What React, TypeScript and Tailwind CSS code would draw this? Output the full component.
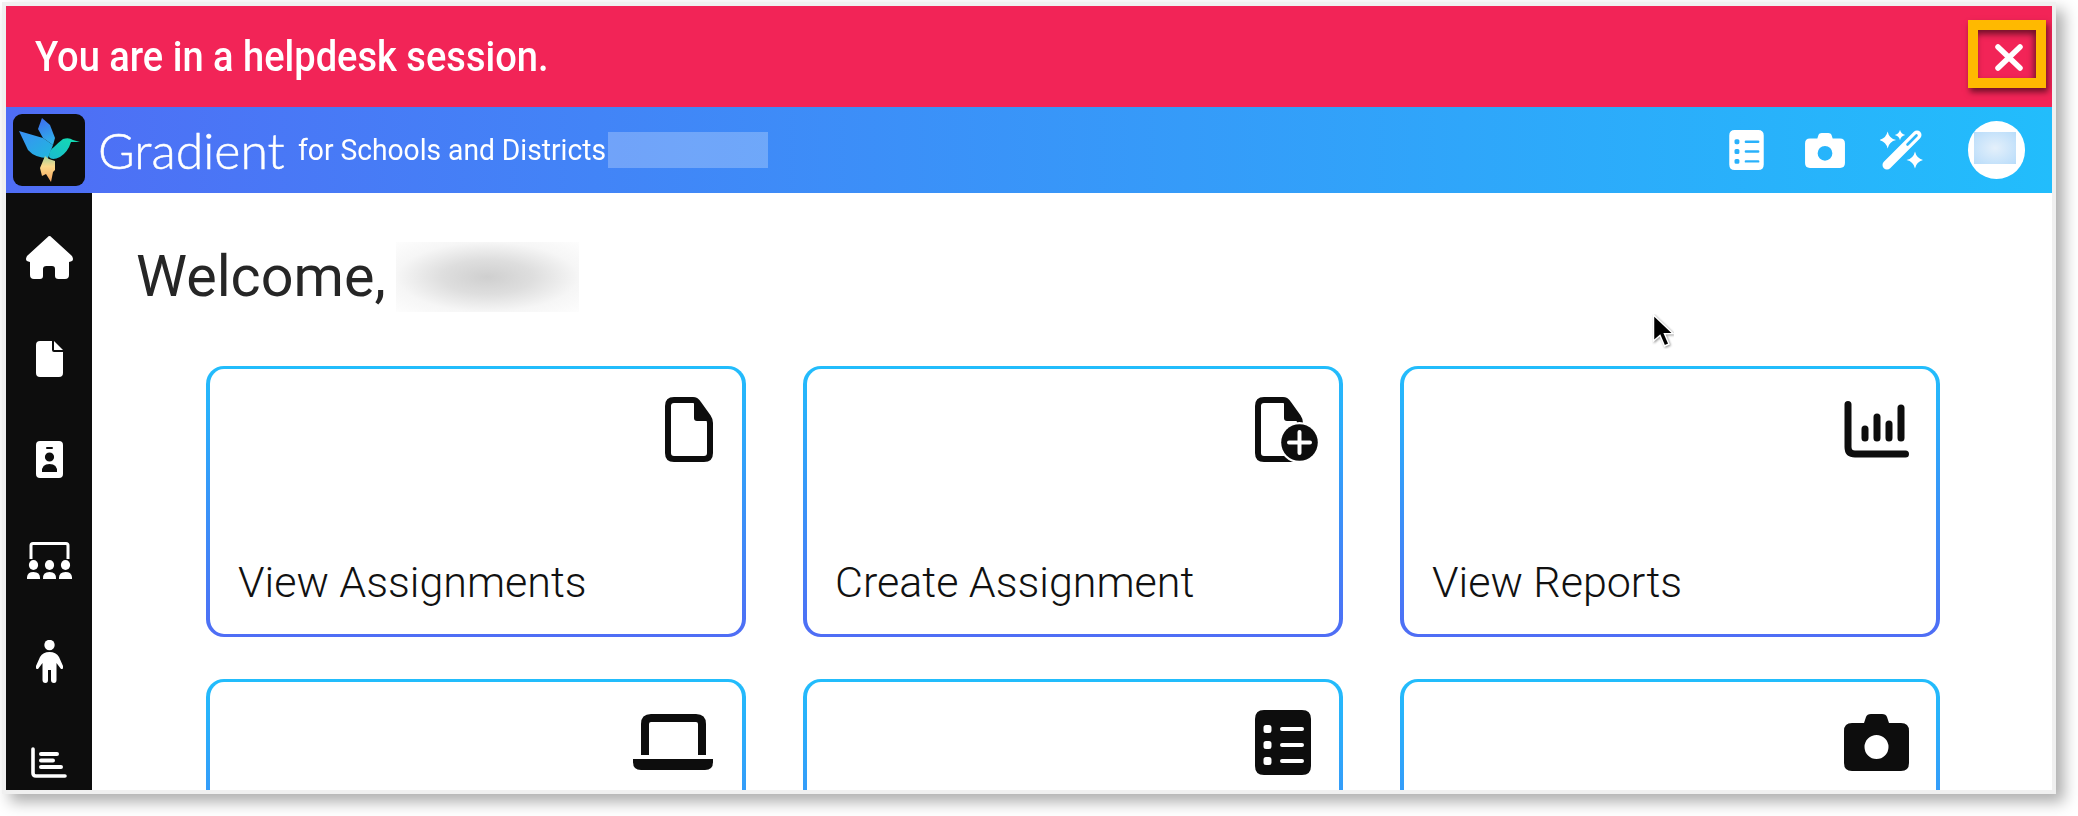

import React from "react";

const rr = (x: number, y: number, w: number, h: number, r: number) =>
  `M${x + r} ${y}H${x + w - r}Q${x + w} ${y} ${x + w} ${y + r}V${y + h - r}Q${x + w} ${y + h} ${x + w - r} ${y + h}H${x + r}Q${x} ${y + h} ${x} ${y + h - r}V${y + r}Q${x} ${y} ${x + r} ${y}Z`;
const circle = (cx: number, cy: number, r: number) =>
  `M${cx - r} ${cy}A${r} ${r} 0 1 0 ${cx + r} ${cy}A${r} ${r} 0 1 0 ${cx - r} ${cy}Z`;
const spark = (cx: number, cy: number, r: number) => {
  const k = r * 0.18;
  return `M${cx} ${cy - r}Q${cx + k} ${cy - k} ${cx + r} ${cy}Q${cx + k} ${cy + k} ${cx} ${cy + r}Q${cx - k} ${cy + k} ${cx - r} ${cy}Q${cx - k} ${cy - k} ${cx} ${cy - r}Z`;
};

const DocOutline = () => (
  <svg width="48" height="65" viewBox="0 0 48 65" className="text-[#0d0d0d]">
    <path d="M9 3H28Q31 3 33 6L43 20Q45 23 45 26V56Q45 62 39 62H9Q3 62 3 56V9Q3 3 9 3Z" fill="none" stroke="currentColor" strokeWidth="6" />
    <path d="M29 3L45 24H32Q29 24 29 21Z" fill="currentColor" />
  </svg>
);
const DocPlus = () => (
  <svg width="64" height="65" viewBox="0 0 64 65" className="text-[#0d0d0d]">
    <path d="M9 3H28Q31 3 33 6L43 20Q45 23 45 26V56Q45 62 39 62H9Q3 62 3 56V9Q3 3 9 3Z" fill="none" stroke="currentColor" strokeWidth="6" />
    <path d="M29 3L45 24H32Q29 24 29 21Z" fill="currentColor" />
    <circle cx="44.5" cy="45.5" r="20.5" fill="#fff" />
    <circle cx="44.5" cy="45.5" r="18.3" fill="currentColor" />
    <path d="M44.5 35V56M34 45.5H55" stroke="#fff" strokeWidth="4" strokeLinecap="round" />
  </svg>
);
const BarChart = () => (
  <svg width="65" height="57" viewBox="0 0 65 57" className="text-[#0d0d0d]">
    <path d="M4 3.5V46Q4 53 11 53H61.5" fill="none" stroke="currentColor" strokeWidth="7" strokeLinecap="round" />
    <path d="M21 28V37M33 16V37M45 23V37M57 7V37" fill="none" stroke="currentColor" strokeWidth="7" strokeLinecap="round" />
  </svg>
);
const Laptop = () => (
  <svg width="80" height="56" viewBox="0 0 80 56" className="text-[#0d0d0d]">
    <path d="M12 41V10Q12 4 18 4H63Q69 4 69 10V41" fill="none" stroke="currentColor" strokeWidth="8" />
    <path d="M0 45H80V48Q80 56 72 56H8Q0 56 0 48Z" fill="currentColor" />
  </svg>
);
const listPath = ([rr(0, 0, 56, 65, 9)] as string[])
  .concat([15, 31, 47].flatMap((y) => [rr(8.5, y, 8, 8, 2.5), rr(25, y + 2, 24, 4, 2)]))
  .join("");
const ListIcon = ({ w, h }: { w: number; h: number }) => (
  <svg width={w} height={h} viewBox="0 0 56 65" className="shrink-0">
    <path d={listPath} fill="currentColor" fillRule="evenodd" />
  </svg>
);
const Camera = ({ w, h }: { w: number; h: number }) => (
  <svg width={w} height={h} viewBox="0 0 65 57" className="shrink-0">
    <path
      d={`M20 9L22 3Q23 0 27 0H38Q42 0 43 3L45 9H57Q65 9 65 17V49Q65 57 57 57H8Q0 57 0 49V17Q0 9 8 9Z${circle(32.5, 33, 12)}`}
      fill="currentColor"
      fillRule="evenodd"
    />
  </svg>
);
const Wand = () => (
  <svg width="43" height="40" viewBox="0 0 43 40" className="shrink-0 text-white">
    <path d={spark(7.6, 10, 8.5) + spark(20, 5, 5.2) + spark(35, 30, 8.5)} fill="currentColor" />
    <path d="M7 35L37 5" stroke="currentColor" strokeWidth="9" strokeLinecap="round" />
    <path d="M27.5 14.5L36.5 5.5" stroke="#2ab5fb" strokeWidth="2.6" strokeLinecap="round" />
  </svg>
);
const Home = () => (
  <svg width="49" height="43" viewBox="0 0 49 43">
    <path d="M24.5 0Q25.5 0 26.5 1.2L47 20Q50 25.5 44 26V39Q44 43 40 43H33.5Q30 43 30 40V33Q30 30 27 30H21.5Q18 30 18 33V40Q18 43 15 43H9Q5 43 5 39V26Q-1 25.5 2 20L22.5 1.2Q23.5 0 24.5 0Z" fill="currentColor" />
  </svg>
);
const SideDoc = () => (
  <svg width="27" height="36" viewBox="0 0 27 36">
    <path d="M4 0H16V9Q16 11 18 11H27V32Q27 36 23 36H4Q0 36 0 32V4Q0 0 4 0Z" fill="currentColor" />
    <path d="M18 0L27 9H18Z" fill="currentColor" />
  </svg>
);
const Badge = () => (
  <svg width="27" height="37" viewBox="0 0 27 37">
    <path
      d={`${rr(0, 0, 27, 37, 4)}${rr(10, 6, 7, 2, 1)}${circle(13.5, 16, 4.6)}M6 31Q5.5 23 13.5 23Q21.5 23 21 31Z`}
      fill="currentColor"
      fillRule="evenodd"
    />
  </svg>
);
const ClassRoom = () => (
  <svg width="45" height="37" viewBox="0 0 45 37">
    <path d="M4 17V3.5Q4 1.5 6 1.5H39Q41 1.5 41 3.5V17" fill="none" stroke="currentColor" strokeWidth="3" />
    {[6.5, 22.5, 38.5].map((x) => (
      <g key={x} fill="currentColor">
        <ellipse cx={x} cy="23" rx="4.6" ry="5" />
        <path d={`M${x - 6.5} 37Q${x - 7} 30 ${x} 30Q${x + 7} 30 ${x + 6.5} 37Z`} />
      </g>
    ))}
  </svg>
);
const Child = () => (
  <svg width="27" height="43" viewBox="0 0 27 43">
    <circle cx="13.5" cy="5" r="5.2" fill="currentColor" />
    <path d="M13.5 12Q20 12 23 17L27 26Q27.5 29.5 25 29L20.5 23V40Q20.5 43 18 43Q15 43 15 40V30H12V40Q12 43 9.5 43Q6.5 43 6.5 40V23L2 29Q-.5 29.5 0 26L4 17Q7 12 13.5 12Z" fill="currentColor" />
  </svg>
);
const SideChart = () => (
  <svg width="36" height="31" viewBox="0 0 36 31">
    <path d="M2 2V26Q2 29 5 29H34" fill="none" stroke="currentColor" strokeWidth="3.6" strokeLinecap="round" />
    <path d="M10 7H26M10 13.5H22M10 20H30" fill="none" stroke="currentColor" strokeWidth="4" strokeLinecap="round" />
  </svg>
);
const Bird = () => (
  <svg width="72" height="72" viewBox="0 0 72 72">
    <defs>
      <linearGradient id="wingA" x1="0" y1="0" x2="1" y2="1">
        <stop offset="0" stopColor="#3a8ff5" />
        <stop offset="1" stopColor="#1fb8dd" />
      </linearGradient>
      <linearGradient id="wingB" x1="0.3" y1="0" x2="0.6" y2="1">
        <stop offset="0" stopColor="#3d6ff0" />
        <stop offset="1" stopColor="#2fb4e8" />
      </linearGradient>
      <linearGradient id="bodyG" x1="0" y1="1" x2="1" y2="0">
        <stop offset="0" stopColor="#1bb9cf" />
        <stop offset="1" stopColor="#11e0ae" />
      </linearGradient>
      <linearGradient id="tailG" x1="0.5" y1="0" x2="0.5" y2="1">
        <stop offset="0" stopColor="#a4d19a" />
        <stop offset="0.4" stopColor="#fbd98a" />
        <stop offset="1" stopColor="#f5a35c" />
      </linearGradient>
    </defs>
    <path d="M29 4L37 11L42 24L40 31L30 24L25 15Z" fill="url(#wingB)" />
    <path d="M6 17L30 24L40 31L35 44Q22 44 15 36Z" fill="url(#wingA)" />
    <path d="M50 25Q56 23 60 26L67 28L58 28Q55 38 47 43Q39 47 36 43Q36 36 41 33Q46 28 50 25Z" fill="url(#bodyG)" />
    <path d="M32 42L36 45L42 47L42 56L40 58L38 68L33 60L29 62L27 54Z" fill="url(#tailG)" />
  </svg>
);

const Card = ({ icon, label, iconRight }: { icon: React.ReactNode; label?: string; iconRight: string }) => (
  <div className="h-[271px] rounded-[18px] border-x-4 border-y-[3px] border-transparent [background:linear-gradient(#fff,#fff)_padding-box,linear-gradient(180deg,#22bdfc,#4f6df5)_border-box] flex flex-col">
    <div className={`h-[120px] flex items-center justify-end ${iconRight}`}>{icon}</div>
    {label && (
      <div className="mt-[68px] ml-[28px] h-[50px] whitespace-nowrap text-[43px] leading-[50px] font-light text-[#111]">
        {label}
      </div>
    )}
  </div>
);

const Cell = ({ children }: { children: React.ReactNode }) => (
  <div className="h-[101px] shrink-0 flex items-center justify-center text-white">{children}</div>
);

export default function App() {
  return (
    <div className="w-[2078px] h-[816px] bg-white pl-[2px] pt-[2px] overflow-hidden [font-family:Roboto,sans-serif]">
      <div className="relative w-[2054px] h-[792px] border-4 border-[#f0f0f0] shadow-[8px_8px_14px_rgba(0,0,0,0.32)] bg-white flex flex-col overflow-hidden">
        <div className="h-[101px] shrink-0 bg-[#f22457] flex items-center justify-between pl-[29px] pr-[6px]">
          <div className="origin-left scale-x-[0.885] whitespace-nowrap text-[43px] leading-none font-medium text-white">
            You are in a helpdesk session.
          </div>
          <div className="w-[78px] h-[68px] mb-[5px] border-[10px] border-[#ffb900] flex items-center justify-center pl-[4px] pt-[7px] shadow-[2px_4px_6px_rgba(0,0,0,0.55),inset_-2px_4px_6px_rgba(0,0,0,0.55)]">
            <svg width="28" height="27" viewBox="0 0 28 27">
              <path d="M3 3L25 24M25 3L3 24" stroke="#fff" strokeWidth="5.5" strokeLinecap="round" />
            </svg>
          </div>
        </div>
        <div className="h-[86px] shrink-0 flex items-center bg-[linear-gradient(90deg,#4f6df5,#22bdfc)]">
          <div className="ml-[7px] w-[72px] h-[72px] rounded-[9px] bg-[#0d0d0d] shrink-0">
            <Bird />
          </div>
          <div className="ml-[13px] w-[185px] shrink-0 whitespace-nowrap text-[50px] leading-none font-light text-white [font-family:Lato,sans-serif] [-webkit-text-stroke:0.5px_white]">
            Gradient
          </div>
          <div className="ml-[15px] w-[308px] shrink-0 origin-left scale-x-[0.94] whitespace-nowrap text-[30px] leading-none text-white">
            for Schools and Districts
          </div>
          <div className="ml-[2px] w-[160px] h-[36px] bg-white/25 shrink-0" />
          <div className="ml-auto mr-[27px] flex items-center text-white">
            <ListIcon w={35} h={40} />
            <div className="ml-[41px]">
              <Camera w={40} h={35} />
            </div>
            <div className="ml-[35px]">
              <Wand />
            </div>
            <div className="ml-[45px] w-[57px] h-[58px] rounded-full bg-white flex items-center justify-center pr-[3px] pb-[4px]">
              <div className="w-[42px] h-[32px] bg-[radial-gradient(ellipse_at_center,#e4f0fb,#b8dcfa)]" />
            </div>
          </div>
        </div>
        <div className="flex-1 min-h-0 flex">
          <div className="w-[86px] shrink-0 bg-[#0d0d0d] pt-[14px] flex flex-col overflow-hidden">
            <Cell><Home /></Cell>
            <Cell><SideDoc /></Cell>
            <Cell><Badge /></Cell>
            <Cell><ClassRoom /></Cell>
            <Cell><Child /></Cell>
            <Cell><SideChart /></Cell>
          </div>
          <div className="flex-1 min-w-0 flex flex-col">
            <div className="h-[70px] mt-[49px] ml-[44px] flex items-center">
              <div className="w-[260px] whitespace-nowrap text-[57.5px] leading-none text-[#262626]">Welcome,</div>
              <div className="w-[183px] h-[70px] bg-[radial-gradient(ellipse_at_center,#cfcfcf_0%,#dedede_35%,#f6f6f6_70%,#fdfdfd_100%)]" />
            </div>
            <div className="mt-[54px] ml-[114px] mr-[112px] grid grid-cols-3 gap-x-[57px] gap-y-[42px]">
              <Card icon={<DocOutline />} label="View Assignments" iconRight="pr-[29px]" />
              <Card icon={<DocPlus />} label="Create Assignment" iconRight="pr-[20px]" />
              <Card icon={<BarChart />} label="View Reports" iconRight="pr-[27px]" />
              <Card icon={<Laptop />} iconRight="pr-[29px]" />
              <Card icon={<ListIcon w={56} h={65} />} iconRight="pr-[28px] text-[#0d0d0d]" />
              <Card icon={<Camera w={65} h={57} />} iconRight="pr-[27px] text-[#0d0d0d]" />
            </div>
          </div>
        </div>
        <svg width="22" height="35" viewBox="0 0 22 35" className="absolute left-[1646px] top-[308px]">
          <path d="M1.5 1V27L8 21.5L12.5 32L17 30L12.5 19.8L21 19.5Z" fill="#000" stroke="#fff" strokeWidth="1.5" className="drop-shadow-[1px_1px_1px_rgba(0,0,0,0.4)]" />
        </svg>
      </div>
    </div>
  );
}
